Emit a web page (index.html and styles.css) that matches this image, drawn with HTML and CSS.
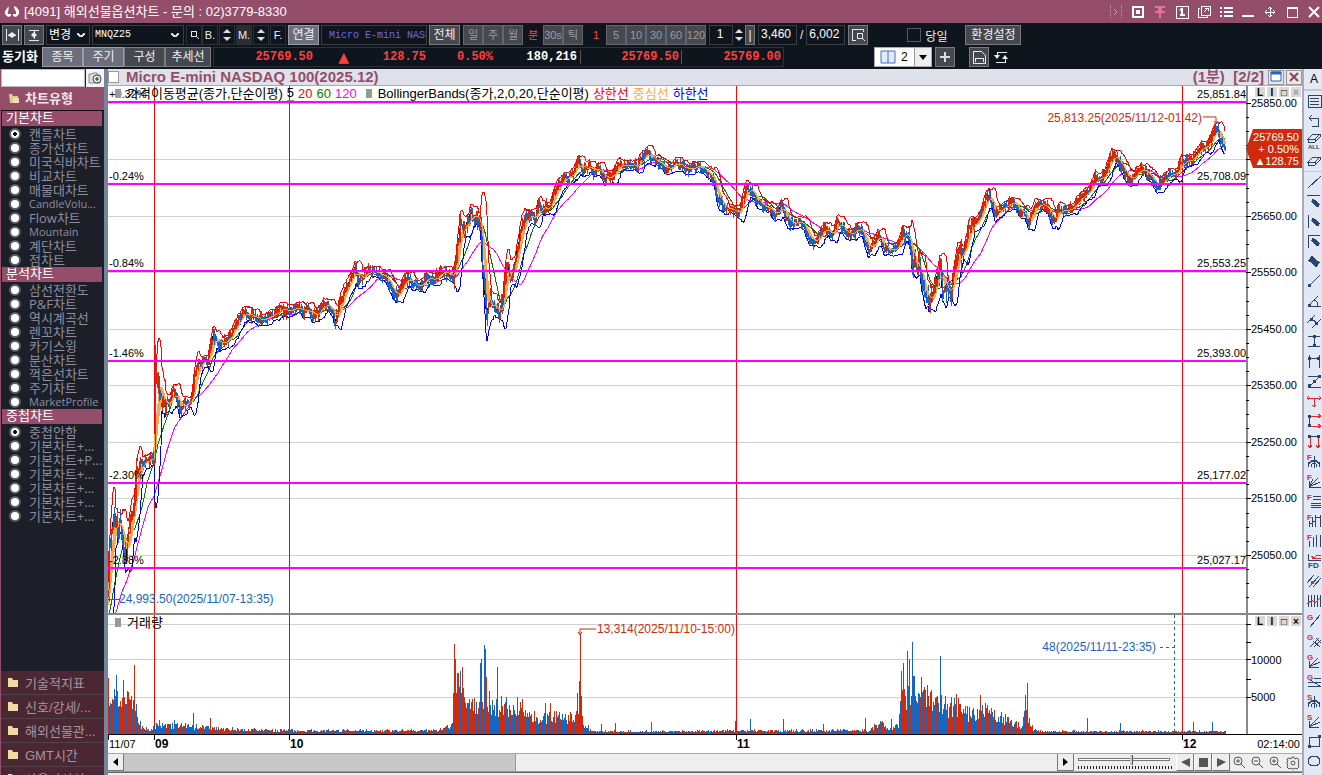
FILE: index.html
```html
<!DOCTYPE html>
<html lang="ko">
<head>
    <meta charset="UTF-8">
    <meta name="viewport" content="width=device-width, initial-scale=1.0">
    <title>해외선물옵션차트</title>
    <link rel="stylesheet" href="styles.css">
</head>
<body>
    <!-- 제목줄 -->
    <header class="titlebar">
        <svg class="logo" width="16" height="12" viewBox="0 0 16 12"><path d="M4 0C4 3 0 4 1 8l3 3 3-1V8L4 8C3 6 6 3 4 0z M10 0c3 1 6 4 5 8l-3 3-3-1V8l3 0c1-3-2-4-2-8z" fill="#fff"/></svg>
        <h1>[4091] 해외선물옵션차트 - 문의 : 02)3779-8330</h1>
        <div class="win">
            <svg width="14" height="16" viewBox="0 0 14 16"><path d="M1.500 1v14M12.500 1v14" stroke="#c49aaa" stroke-dasharray="1 1"/><path d="M5 5l3 3-3 3" stroke="#c49aaa" fill="none"/></svg>
            <button aria-label="캡처"><svg width="12" height="12" viewBox="0 0 12 12"><path d="M1 1h10v10H1z" class="wl"/><path d="M4 4h4v4H4z" fill="#fff"/></svg></button>
            <button aria-label="고정"><svg width="12" height="12" viewBox="0 0 12 12"><path d="M1 0h10v2H8v3h3v2H7v5H5V7H1V5h3V2H1z" fill="#e8729c"/></svg></button>
            <button aria-label="화면 1"><svg width="14" height="14" viewBox="0 0 14 14"><path d="M1 1h12v12H1z" class="thin"/><path d="M5 5l2-1v6M5 10h5" class="wl"/></svg></button>
            <button aria-label="새 창"><svg width="14" height="14" viewBox="0 0 14 14"><path d="M4 1h9v9H4zM3 3H1v9h9v-1M7 7l4-4M8 3h3v3" class="thin"/></svg></button>
            <button aria-label="목록"><svg width="13" height="12" viewBox="0 0 13 12"><path d="M0 2h2M0 6h2M0 10h2M4 2h9M4 6h9M4 10h9" class="wl"/></svg></button>
            <button aria-label="최소화"><svg width="12" height="12" viewBox="0 0 12 12"><path d="M0 10h12" class="wl"/></svg></button>
            <button aria-label="이동"><svg width="12" height="12" viewBox="0 0 12 12"><path d="M6 1v10M1 6h10M4 3l2-2 2 2M4 9l2 2 2-2M3 4L1 6l2 2M9 4l2 2-2 2" class="thin"/></svg></button>
            <button aria-label="최대화"><svg width="12" height="12" viewBox="0 0 12 12"><path d="M1 1h10v10H1zM1 2h10" class="thin"/></svg></button>
            <button aria-label="닫기"><svg width="12" height="12" viewBox="0 0 12 12"><path d="M1 1l10 10M11 1L1 11" class="wl"/></svg></button>
        </div>
    </header>

    <!-- 도구 모음 -->
    <div class="toolbar">
        <div class="row">
            <button class="btn w20" aria-label="좌우 맞춤"><svg width="14" height="12" viewBox="0 0 14 12"><path d="M1 0v12M13 0v12M3 6h8" class="ic"/><path d="M7 3v6L3 6zM7 3v6l4-3z" fill="#eee"/></svg></button>
            <button class="btn w20" aria-label="상하 맞춤"><svg width="12" height="12" viewBox="0 0 12 12"><path d="M1 1h10M1 11h10M6 2v8" class="ic"/><path d="M3 6l3-3 3 3-3 3z" fill="#eee"/></svg></button>
            <select class="sel w44" aria-label="변경"><option>변경</option></select>
            <select class="sel code" aria-label="종목코드"><option>MNQZ25</option></select>
            <div class="mini">
                <button aria-label="검색"><svg width="10" height="10" viewBox="0 0 10 10"><circle cx="5" cy="4" r="3" class="ic"/><path d="M7 6l3 3" class="ic"/></svg></button>
                <button>B.</button>
                <button class="spin" aria-label="B 조절"><svg width="8" height="14" viewBox="0 0 8 14"><path d="M0 5l4-4 4 4zM0 9l4 4 4-4z" fill="#ddd"/></svg></button>
                <button class="m">M.</button>
                <button class="spin" aria-label="M 조절"><svg width="8" height="14" viewBox="0 0 8 14"><path d="M0 5l4-4 4 4zM0 9l4 4 4-4z" fill="#ddd"/></svg></button>
                <button>F.</button>
            </div>
            <button class="btn on w31">연결</button>
            <input class="name" aria-label="종목명" value="Micro E-mini NASDAQ">
            <button class="btn w31">전체</button>
            <div class="group">
                <button>일</button><button>주</button><button>월</button><button class="cur">분</button><button>30s</button><button>틱</button>
            </div>
            <div class="group">
                <button class="cur">1</button><button>5</button><button>10</button><button>30</button><button>60</button><button>120</button>
            </div>
            <div class="counts">
                <input class="num w24" aria-label="주기" value="1">
                <button class="spin" aria-label="주기 조절"><svg width="8" height="14" viewBox="0 0 8 14"><path d="M0 5l4-4 4 4zM0 9l4 4 4-4z" fill="#ddd"/></svg></button>
                <button class="btn bar">|</button>
                <input class="num w40" aria-label="표시 개수" value="3,460">
                <span>/</span>
                <input class="num w40" aria-label="전체 개수" value="6,002">
                <button class="btn w20" aria-label="찾기"><svg width="14" height="14" viewBox="0 0 14 14"><path d="M5 12H1V1h11v3M12 11l2 2" class="ic"/><circle cx="9" cy="8" r="3" class="ic"/></svg></button>
            </div>
            <label class="today"><input type="checkbox">당일</label>
            <button class="btn w56">환경설정</button>
        </div>
        <div class="row">
            <b class="sync">동기화</b>
            <div class="tabs">
                <button class="btn on">종목</button><button class="btn on">주기</button><button class="btn">구성</button><button class="btn">추세선</button>
            </div>
            <div class="quote">
                <span class="q1">25769.50</span><span class="q2">▲</span><span class="q3">128.75</span><span class="q4">0.50%</span><span class="q5">180,216</span><span class="q6">25769.50</span><span class="q6">25769.00</span>
            </div>
            <div class="layout">
                <svg width="16" height="14" viewBox="0 0 16 14"><path d="M1 1h14v12H1zM8 1v12" fill="#e4ebf5" stroke="#3f6fd0"/></svg>
                <span>2</span>
                <button aria-label="화면 분할"><svg width="8" height="5" viewBox="0 0 8 5"><path d="M0 0h8L4 5z"/></svg></button>
            </div>
            <button class="btn w20" aria-label="추가"><svg width="12" height="12" viewBox="0 0 12 12"><path d="M6 1v10M1 6h10" stroke="#ddd" stroke-width="2"/></svg></button>
            <button class="btn w20 save" aria-label="저장"><svg width="14" height="14" viewBox="0 0 14 14"><path d="M1 1h8l4 4v8H1zM3 12V8h8v4" class="ic"/></svg></button>
            <button class="plain" aria-label="새로고침"><svg width="16" height="14" viewBox="0 0 16 14"><path d="M14 2H4v5M3 12h9V7" class="ic"/><path d="M1 5h6L4 9zM9 9h6l-3-4z" fill="#eee"/></svg></button>
        </div>
    </div>

    <div class="main">
        <!-- 왼쪽 차트 유형 -->
        <aside class="side">
            <div class="find">
                <input aria-label="차트 검색">
                <button aria-label="찾기"><svg width="14" height="13" viewBox="0 0 14 13"><path d="M1 2h3l1-1h4l1 2h2v8H1z" fill="#ddd" stroke="#888"/><circle cx="9" cy="7" r="4" fill="#eee" stroke="#444"/><path d="M7 7h4M9 5v4" stroke="#222"/></svg></button>
            </div>
            <h2><svg width="12" height="11" viewBox="0 0 12 11"><path d="M1 1h3l1 2h5v2H4l1 5H2z" fill="#e8c88a"/><path d="M4 5h7v5H5z" fill="#f3dfae"/></svg>차트유형</h2>
            <div class="list">
                <h3>기본차트</h3>
                <label><input type="radio" name="base" checked><span>캔들차트</span></label>
                <label><input type="radio" name="base"><span>종가선차트</span></label>
                <label><input type="radio" name="base"><span>미국식바차트</span></label>
                <label><input type="radio" name="base"><span>비교차트</span></label>
                <label><input type="radio" name="base"><span>매물대차트</span></label>
                <label class="en"><input type="radio" name="base"><span>CandleVolu...</span></label>
                <label><input type="radio" name="base"><span>Flow차트</span></label>
                <label class="en"><input type="radio" name="base"><span>Mountain</span></label>
                <label><input type="radio" name="base"><span>계단차트</span></label>
                <label><input type="radio" name="base"><span>점차트</span></label>
                <h3>분석차트</h3>
                <label><input type="radio" name="anal"><span>삼선전환도</span></label>
                <label><input type="radio" name="anal"><span>P&amp;F차트</span></label>
                <label><input type="radio" name="anal"><span>역시계곡선</span></label>
                <label><input type="radio" name="anal"><span>렌꼬차트</span></label>
                <label><input type="radio" name="anal"><span>카기스윙</span></label>
                <label><input type="radio" name="anal"><span>분산차트</span></label>
                <label><input type="radio" name="anal"><span>꺽은선차트</span></label>
                <label><input type="radio" name="anal"><span>주기차트</span></label>
                <label class="en"><input type="radio" name="anal"><span>MarketProfile</span></label>
                <h3>중첩차트</h3>
                <label><input type="radio" name="over" checked><span>중첩안함</span></label>
                <label><input type="radio" name="over"><span>기본차트+...</span></label>
                <label><input type="radio" name="over"><span>기본차트+P...</span></label>
                <label><input type="radio" name="over"><span>기본차트+...</span></label>
                <label><input type="radio" name="over"><span>기본차트+...</span></label>
                <label><input type="radio" name="over"><span>기본차트+...</span></label>
                <label><input type="radio" name="over"><span>기본차트+...</span></label>
            </div>
            <nav class="folders">
                <button><svg width="11" height="9" viewBox="0 0 11 9"><path d="M0 0h4l1 2h5v7H0z" fill="#f3d9a4"/></svg>기술적지표</button>
                <button><svg width="11" height="9" viewBox="0 0 11 9"><path d="M0 0h4l1 2h5v7H0z" fill="#f3d9a4"/></svg>신호/강세/...</button>
                <button><svg width="11" height="9" viewBox="0 0 11 9"><path d="M0 0h4l1 2h5v7H0z" fill="#f3d9a4"/></svg>해외선물관...</button>
                <button><svg width="11" height="9" viewBox="0 0 11 9"><path d="M0 0h4l1 2h5v7H0z" fill="#f3d9a4"/></svg>GMT시간</button>
                <button><svg width="11" height="9" viewBox="0 0 11 9"><path d="M0 0h4l1 2h5v7H0z" fill="#f3d9a4"/></svg>사용자상식</button>
            </nav>
        </aside>

        <!-- 차트 -->
        <section class="chart">
            <div class="caption">
                <input type="checkbox" aria-label="차트 선택">
                <h2>Micro E-mini NASDAQ 100(2025.12)</h2>
                <b>(1분)&nbsp; [2/2]</b>
                <button aria-label="최대화"><svg width="12" height="12" viewBox="0 0 12 12"><path d="M1 1h10v9H1z" fill="#fff" stroke="#2a5fc0"/><path d="M1 2h10" stroke="#2a5fc0" stroke-width="3"/></svg></button>
                <button aria-label="닫기"><svg width="10" height="10" viewBox="0 0 10 10"><path d="M1 1l8 8M9 1L1 9" stroke="#8d4058" stroke-width="2"/></svg></button>
            </div>
            <div class="pane price">
                <svg id="price"></svg>
                <div class="legend">
                    <i></i><span>가격이동평균(종가,단순이평)</span><span class="u">5</span><span class="red">20</span><span class="green">60</span><span class="pink">120</span>
                    <i></i><span>BollingerBands(종가,2,0,20,단순이평)</span><span class="red">상한선</span><span class="orange">중심선</span><span class="blue">하한선</span>
                </div>
                <div class="ctl"><button>L</button><button>I</button><button>□</button><button class="off">×</button></div>
            </div>
            <div class="pane volume">
                <svg id="volume"></svg>
                <div class="legend"><i></i><span>거래량</span></div>
                <div class="ctl"><button>L</button><button>I</button><button>□</button><button>×</button></div>
            </div>
            <div class="dates"><svg id="dates"></svg><span>02:14:00</span></div>
            <div class="scroll">
                <button aria-label="왼쪽"><svg width="5" height="8" viewBox="0 0 5 8"><path d="M5 0v8L0 4z"/></svg></button>
                <div class="track"><div class="thumb"></div></div>
                <button aria-label="오른쪽"><svg width="5" height="8" viewBox="0 0 5 8"><path d="M0 0v8l5-4z"/></svg></button>
                <div class="zoom"><input type="range" min="0" max="100" value="59" aria-label="확대"><div class="ticks"></div></div>
                <button class="pl" aria-label="이전"><svg width="9" height="9" viewBox="0 0 9 9"><path d="M9 0v9L0 4z" fill="#555"/></svg></button>
                <button class="pl" aria-label="정지"><svg width="9" height="9" viewBox="0 0 9 9"><path d="M0 0h9v9H0z" fill="#555"/></svg></button>
                <button class="pl" aria-label="재생"><svg width="9" height="9" viewBox="0 0 9 9"><path d="M0 0v9l9-5z" fill="#555"/></svg></button>
                <button class="zm" aria-label="확대"><svg width="13" height="13" viewBox="0 0 13 13"><circle cx="5" cy="5" r="4"/><path d="M8 8l4 4M3 5h4M5 3v4"/></svg></button>
                <button class="zm" aria-label="축소"><svg width="13" height="13" viewBox="0 0 13 13"><circle cx="5" cy="5" r="4"/><path d="M8 8l4 4M3 5h4"/></svg></button>
                <button class="zm" aria-label="영역 확대"><svg width="13" height="13" viewBox="0 0 13 13"><circle cx="5" cy="5" r="4"/><path d="M8 8l4 4M4 4h2v2H4z"/></svg></button>
                <button class="zm" aria-label="설정"><svg width="14" height="14" viewBox="0 0 14 14"><path d="M6 1h2l1 2 2-1 2 2-1 2 1 1v1l-1 1 1 2-2 2-2-1-1 1H6l-1-1-2 1-2-2 1-2-1-1V6l1-1-1-2 2-1 2 1z"/><circle cx="7" cy="7" r="2"/></svg></button>
            </div>
            <div class="foot"></div>
        </section>

        <!-- 오른쪽 그리기 도구 -->
        <nav class="draw">
            <button class="first">A</button>
            <button aria-label="목록"><svg viewBox="0 0 14 14"><path d="M1 1h13v12H1zM3 4h9M3 7h9M3 10h9"/></svg></button>
            <button aria-label="되돌리기"><svg viewBox="0 0 14 14"><path d="M5 1L2 4l3 3M2 4h9v8H5"/></svg></button>
            <button aria-label="전체 삭제"><svg viewBox="0 0 14 14"><path d="M1 5l5-5h7l-5 5zM1 5v3h7l5-5V0M8 5v3"/><text x="1" y="15">ALL</text></svg></button>
            <button aria-label="삭제"><svg viewBox="0 0 14 14"><path d="M1 8l5-5h7l-5 5zM1 8v3h7l5-5V3M8 8v3"/></svg></button>
            <button class="sep" aria-label="추세선"><svg viewBox="0 0 14 14"><path d="M1 13L14 1"/></svg></button>
            <button aria-label="수평선"><svg viewBox="0 0 14 14"><path d="M0 1h13"/><path class="pen" d="M5 6l7 6"/></svg></button>
            <button aria-label="수직선"><svg viewBox="0 0 14 14"><path d="M1 1v13"/><path class="pen" d="M5 5l7 6"/></svg></button>
            <button aria-label="십자선"><svg viewBox="0 0 14 14"><path d="M1 14V1h12"/><path class="pen" d="M5 5l7 6"/></svg></button>
            <button aria-label="펜"><svg viewBox="0 0 14 14"><path class="pen big" d="M3 4l8 7"/></svg></button>
            <button aria-label="선분"><svg viewBox="0 0 14 14"><path d="M2 12L13 1"/><path class="sq" d="M1 10h3v3H1z"/></svg></button>
            <button aria-label="각도"><svg viewBox="0 0 14 14"><path d="M1 12L11 2M1 12h13M7 6c3 1 4 3 4 6"/><path class="sq" d="M1 10h3v3H1z"/></svg></button>
            <button aria-label="평행선"><svg viewBox="0 0 14 14"><path d="M0 9L8 1M5 14l9-9M5 5l5 4"/><path class="sq" d="M3 4h3v3H3zM8 8h3v3H8z"/></svg></button>
            <button aria-label="세로 간격"><svg viewBox="0 0 14 14"><path d="M1 2h12M1 12h12M7 2v10"/><path class="sq" d="M6 1h3v3H6zM6 10h3v3H6z"/></svg></button>
            <button aria-label="가로 간격"><svg viewBox="0 0 14 14"><path d="M2 1v13M12 1v13M2 4h10"/><path class="sq" d="M1 3h3v3H1zM10 3h3v3h-3z"/></svg></button>
            <button aria-label="지그재그"><svg viewBox="0 0 14 14"><path d="M1 2h12L2 13h12"/><path class="sq" d="M11 1h3v3h-3zM6 6h3v3H6zM1 10h3v3H1z"/></svg></button>
            <button class="r" aria-label="가격 표시"><svg viewBox="0 0 14 14"><path d="M0 4h14M7 4v9M2 2L0 4l2 2M12 2l2 2-2 2M5 11l2 2 2-2"/></svg></button>
            <button class="r" aria-label="가로 확장"><svg viewBox="0 0 14 14"><path d="M2 2h12M2 12h12M11 0l3 2-3 2M11 10l3 2-3 2"/><path class="n" d="M2 2v10"/><path class="sq" d="M1 1h3v3H1zM1 10h3v3H1z"/></svg></button>
            <button class="r" aria-label="세로 확장"><svg viewBox="0 0 14 14"><path d="M3 2v11M11 2v11M1 11l2 3 2-3M9 11l2 3 2-3"/><path class="n" d="M3 2h8"/><path class="sq" d="M1 1h3v3H1zM10 1h3v3h-3z"/></svg></button>
            <button aria-label="피보나치 원"><svg viewBox="0 0 14 14"><text class="t" x="0" y="6">F</text><path d="M7 2v12M1 13c1-9 11-9 12 0M4 13c0-5 6-5 6 0M1 9l6-2 6 2"/></svg></button>
            <button aria-label="피보나치 팬"><svg viewBox="0 0 14 14"><text class="t" x="0" y="6">F</text><path d="M2 7v6h12M2 13l9-9M2 13l11-5M2 13L6 5"/></svg></button>
            <button aria-label="피보나치 조정"><svg viewBox="0 0 14 14"><text class="t" x="0" y="6">F</text><path d="M6 2h8M6 5h8M4 9h10M4 11h10M4 13h10"/></svg></button>
            <button aria-label="피보나치 목표"><svg viewBox="0 0 14 14"><text class="t" x="0" y="6">F</text><path d="M2 7v6M5 3v10M8 1v12M13 1v12M2 9h3M5 7h3M8 3h5"/></svg></button>
            <button aria-label="피보나치 시간"><svg viewBox="0 0 14 14"><text class="t" x="0" y="6">F</text><path d="M2 7v6M6 3v10M9 1v12M13 1v12"/></svg></button>
            <button class="r" aria-label="FD"><svg viewBox="0 0 14 14"><path d="M4 2l3 2 3-3h4M5 4h9"/><path class="n" d="M1 0v6h13"/><text x="1" y="14" class="fd">FD</text></svg></button>
            <button aria-label="채널"><svg viewBox="0 0 14 14"><path d="M0 9l7-8M2 13L12 2M6 13l8-9"/><path class="dot" d="M4 7h3v3H4z"/></svg></button>
            <button class="r" aria-label="주기선"><svg viewBox="0 0 14 14"><path class="n" d="M1 1v12M4 1v12M7 1v12M10 1v12M13 1v12"/><path d="M0 10l5-4 3 3 5-5"/></svg></button>
            <button aria-label="갠 라인"><svg viewBox="0 0 14 14"><text class="t" x="0" y="6">G</text><path d="M3 13L13 1"/></svg></button>
            <button aria-label="갠 그리드"><svg viewBox="0 0 14 14"><text class="t" x="0" y="6">G</text><path d="M3 13l9-9M7 13l7-7M6 7l7 6M9 4l5 5"/></svg></button>
            <button aria-label="갠 팬"><svg viewBox="0 0 14 14"><text class="t" x="0" y="6">G</text><path d="M2 7v6h10M2 13L11 4M2 13l11-5"/></svg></button>
            <button aria-label="갠 조정"><svg viewBox="0 0 14 14"><text class="t" x="0" y="6">G</text><path d="M7 4h7M1 8h13M1 12h13M3 6l10 6"/></svg></button>
            <button aria-label="스피드 아크"><svg viewBox="0 0 14 14"><text class="t" x="0" y="6">S</text><path d="M7 2v12M1 13c1-9 11-9 12 0M4 13c0-5 6-5 6 0M1 9l6-2 6 2"/></svg></button>
            <button aria-label="스피드 라인"><svg viewBox="0 0 14 14"><text class="t" x="0" y="6">S</text><path d="M2 7v6h10M2 13L12 3M2 13l11-5"/></svg></button>
            <button aria-label="사각형"><svg viewBox="0 0 14 14"><path d="M2 3h10v9H2z"/><path class="sq" d="M11 1h3v3h-3zM1 11h3v3H1z"/></svg></button>
            <button aria-label="원"><svg viewBox="0 0 14 14"><ellipse cx="7" cy="7" rx="6" ry="5"/></svg></button>
        </nav>
    </div>
    <script src="chart.js"></script>
</body>
</html>
```

FILE: styles.css
```css
*{
    margin: 0;
    padding: 0;
    box-sizing: border-box;
}
body{
    display: flex;
    flex-direction: column;
    height: 100vh;
    overflow: hidden;
    background-color: #0f151c;
    font: 12px "Liberation Sans", "Noto Sans CJK KR", sans-serif;
}
button, input, select{
    font: inherit;
    border: 0;
    border-radius: 0;
}
button{
    display: flex;
    align-items: center;
    justify-content: center;
    white-space: nowrap;
    background: none;
}
svg{
    display: block;
    flex: none;
}

/* 제목줄 */
.titlebar{
    display: flex;
    align-items: center;
    flex: none;
    height: 23px;
    padding: 0 1px 0 4px;
    background-color: #944e69;
    color: #fff;
}
.titlebar h1{
    flex: 1;
    margin-left: 4px;
    font-size: 13px;
    line-height: 16px;
    font-weight: normal;
}
.win{
    display: flex;
    align-items: center;
    gap: 8px;
}
.win button{
    width: 14px;
    height: 16px;
}
.wl, .thin, .ic{
    fill: none;
    stroke: #fff;
    stroke-width: 2;
}
.thin{
    stroke-width: 1;
    shape-rendering: crispEdges;
}
.ic{
    stroke: #e8e8e8;
    stroke-width: 1;
    shape-rendering: crispEdges;
}

/* 도구 모음 */
.toolbar{
    flex: none;
    height: 46px;
    padding: 1px 2px;
    color: #eee;
}
.row{
    display: flex;
    align-items: center;
    height: 22px;
    gap: 2px;
}
.btn{
    height: 20px;
    flex: none;
    background-color: #45494f;
    border: 1px solid #777b80;
    color: #f0f0f0;
    line-height: 16px;
}
.btn.on{
    background-color: #6c6f7b;
    border-color: #9a9da8;
}
.w20{ width: 20px; }
.w24{ width: 24px; }
.w31{ width: 31px; }
.w40{ width: 39px; }
.w44{ width: 44px; }
.w56{ width: 56px; }
.sel, .name, .num{
    height: 20px;
    background-color: #0f151c;
    border: 1px solid #3a3d44;
    color: #fff;
}
.sel{
    appearance: none;
    padding-left: 2px;
    line-height: 18px;
    background-image: linear-gradient(45deg, transparent 35%, #ddd 35%, #ddd 65%, transparent 65%), linear-gradient(-45deg, transparent 35%, #ddd 35%, #ddd 65%, transparent 65%);
    background-size: 4px 4px;
    background-position: right 8px center, right 4px center;
    background-repeat: no-repeat;
}
.code{
    width: 92px;
    font: 10px/18px "Liberation Mono", monospace;
}
.mini, .group, .tabs, .counts{
    display: flex;
    align-items: center;
    flex: none;
}
.mini button{
    width: 16px;
    height: 20px;
    border: 1px solid #2b2f36;
    color: #eee;
    font-size: 11px;
}
.mini .m{
    background-color: #2b2d31;
}
.mini .spin{
    margin: 0 1px;
}
.name{
    width: 106px;
    padding-left: 7px;
    color: #6f67e8;
    font: 10px "Liberation Mono", "Noto Sans CJK KR", monospace;
}
.group{
    margin-left: 1px;
}
.group button{
    width: 20px;
    height: 20px;
    background-color: #45494f;
    border: 1px solid #63666b;
    color: #9a9da1;
    font-size: 11px;
    line-height: 16px;
}
.group .cur{
    background-color: #0f151c;
    border-color: #0f151c;
    color: #ff4a40;
}
.counts{
    margin-left: 1px;
}
.spin{
    width: 12px;
    height: 18px;
}
.bar{
    width: 10px;
    margin-right: 3px;
}
.num{
    padding: 0 4px 2px 2px;
    font-size: 12px;
}
.num.w24{
    text-align: center;
}
.counts span{
    padding: 0 3px;
}
.counts .w20{
    margin-left: 3px;
}
.today{
    display: flex;
    align-items: center;
    gap: 4px;
    margin: 0 16px 0 26px;
}
.today input{
    appearance: none;
    width: 14px;
    height: 14px;
    border: 1px solid #55585e;
}
.counts + .today{
    margin-left: 37px;
}
.sync{
    width: 38px;
    font-size: 13px;
    line-height: 16px;
    color: #fff;
    white-space: nowrap;
}
.tabs .btn{
    width: 41px;
}
.tabs .btn:last-child{
    width: 46px;
}
.quote{
    display: flex;
    align-items: center;
    height: 20px;
    border: 1px solid #2b2f3a;
    color: #ff4040;
    text-align: right;
    font: bold 12px "Liberation Mono", monospace;
}
.q1{ width: 99px; }
.q2{
    width: 36px;
    font: 14px "DejaVu Sans", sans-serif;
}
.q3{ width: 77px; }
.q4{ width: 67px; }
.q5{
    width: 88px;
    padding-right: 3px;
    border-right: 1px solid #555;
    color: #fff;
}
.q6{
    width: 101px;
    padding-right: 2px;
}
.q5 + .q6{
    border-right: 1px solid #555;
}
.layout{
    display: flex;
    align-items: center;
    height: 20px;
    margin: 0 1px 0 88px;
    padding-left: 5px;
    gap: 5px;
    background-color: #fff;
    border: 1px solid #aaa;
    color: #000;
}
.layout button{
    width: 17px;
    height: 18px;
    margin-left: 1px;
    background-color: #eee;
    border-left: 1px solid #999;
}
.save{
    margin-left: 12px;
}
.plain{
    width: 20px;
    height: 20px;
}

/* 왼쪽 */
.main{
    display: flex;
    flex: 1;
    min-height: 0;
}
.side{
    display: flex;
    flex-direction: column;
    flex: none;
    width: 108px;
    border-left: 1px solid #944e69;
    border-right: 4px solid #74869a;
    background-color: #1c1e28;
}
.find{
    display: flex;
    flex: none;
    height: 18px;
    background-color: #fff;
}
.find input{
    flex: 1;
    min-width: 0;
    border: 1px solid #bbb;
}
.find button{
    width: 19px;
    border-left: 1px solid #222;
    background-color: #f4f4f4;
}
.side h2{
    display: flex;
    align-items: center;
    flex: none;
    height: 23px;
    padding-left: 7px;
    gap: 5px;
    background-color: #944e69;
    color: #f3e6ea;
    font-size: 13px;
    line-height: 16px;
}
.list{
    flex: 1;
    overflow: hidden;
    border-top: 1px solid #111;
}
.list h3{
    height: 15px;
    margin: 0 2px 0 1px;
    padding-left: 4px;
    background-color: #944e69;
    color: #fff;
    font-size: 13px;
    line-height: 14px;
    font-weight: normal;
}
.list label{
    display: flex;
    align-items: center;
    height: 14px;
    padding-left: 8px;
    color: #8c8fa0;
    white-space: nowrap;
    font: 13px/14px "Open Sans", "Noto Sans CJK KR", sans-serif;
}
.list .en{
    font-size: 11px;
}
.list h3 + label{
    margin-top: 1px;
}
.list input{
    appearance: none;
    flex: none;
    width: 12px;
    height: 12px;
    margin-right: 8px;
    border: 2px solid #5a5c60;
    border-radius: 50%;
    background-color: #fff;
}
.list input:checked{
    background-image: radial-gradient(circle, #000 2px, transparent 2px);
}
.folders{
    flex: none;
    height: 104px;
    overflow: hidden;
}
.folders button{
    justify-content: flex-start;
    width: 100%;
    height: 24px;
    padding-left: 7px;
    gap: 6px;
    background-color: #4a2733;
    border-bottom: 1px solid #4b4448;
    color: #a596a0;
    font-size: 13px;
}

/* 차트 */
.chart{
    display: flex;
    flex-direction: column;
    flex: 1;
    min-width: 0;
    background-color: #fff;
}
.caption{
    display: flex;
    align-items: center;
    flex: none;
    height: 17px;
    gap: 2px;
    background-color: #dfe2ea;
    border-bottom: 1px solid #aaa;
    color: #944e69;
}
.caption input{
    appearance: none;
    width: 11px;
    height: 12px;
    background-color: #fff;
    border: 1px solid #999;
}
.caption h2, .caption b{
    font-size: 15px;
    line-height: 16px;
    white-space: nowrap;
}
.caption h2{
    flex: 1;
    padding-left: 5px;
}
.caption b{
    padding-right: 2px;
}
.caption button{
    width: 16px;
    height: 15px;
    background-color: #e8e8e8;
    border: 1px solid #999;
}
.pane{
    position: relative;
    min-height: 0;
    overflow: hidden;
}
.price{
    flex: 529;
}
.volume{
    flex: 120;
    border-top: 2px solid #888;
}
.pane > svg, .dates svg{
    width: 100%;
    height: 100%;
}
.pane > svg text, .dates text{
    font-size: 11px;
}
.pane > svg .note, .dates .day{
    font-size: 12px;
}
.legend{
    position: absolute;
    left: 7px;
    top: 0;
    display: flex;
    align-items: center;
    height: 15px;
    gap: 4px;
    font-size: 13px;
    line-height: 14px;
    white-space: nowrap;
}
.legend i{
    width: 6px;
    height: 9px;
    margin-right: 2px;
    background-color: #999;
}
.legend span + i{
    margin-left: 5px;
}
.u{ border-bottom: 1px solid #888; }
.red{ color: #f00; }
.green{ color: #008000; }
.pink{ color: #f0f; }
.orange{ color: #ffa64d; }
.blue{ color: #00f; }
.ctl{
    position: absolute;
    right: 1px;
    top: 1px;
    display: flex;
    gap: 2px;
}
.ctl button{
    width: 10px;
    height: 10px;
    background-color: #d8d8d8;
    font-size: 10px;
    font-weight: bold;
}
.ctl .off{
    color: #999;
}
.dates{
    position: relative;
    flex: none;
    height: 18px;
}
.dates span{
    position: absolute;
    right: 2px;
    top: 3px;
    font-size: 11px;
}
.scroll{
    display: flex;
    flex: none;
    height: 19px;
    background-color: #eee;
    border-top: 1px solid #aaa;
    border-bottom: 1px solid #999;
}
.scroll button{
    width: 16px;
    flex: none;
    background-color: #eee;
    border-right: 1px solid #777;
    border-bottom: 1px solid #777;
}
.track{
    flex: 1;
    border-right: 1px solid #777;
}
.thumb{
    width: 42%;
    height: 100%;
    background-color: #c8c8c8;
    border-right: 1px solid #999;
}
.zoom{
    width: 94px;
    margin: 0 4px;
}
.zoom input{
    display: block;
    appearance: none;
    width: 92px;
    height: 3px;
    margin: 4px 0 5px;
    border: 1px solid #777;
    background-color: #fff;
}
.zoom input::-webkit-slider-thumb{
    appearance: none;
    width: 3px;
    height: 10px;
    background-color: #ccc;
    border-right: 1px solid #555;
}
.ticks{
    height: 3px;
    background-image: repeating-linear-gradient(90deg, #222 0 1px, transparent 1px 3px);
}
.scroll .pl{
    width: 18px;
    border-left: 1px solid #fff;
}
.scroll .zm{
    width: 18px;
    border: 0;
}
.zm svg{
    fill: none;
    stroke: #555;
}
.foot{
    flex: none;
    height: 3px;
    border-top: 1px solid #666;
    background-color: #eee;
}

/* 오른쪽 */
.draw{
    flex: none;
    width: 20px;
    overflow: hidden;
    background-color: #e2e8f4;
    border-left: 2px solid #aab;
}
.draw button{
    width: 18px;
    height: 20px;
    padding-left: 2px;
}
.draw .first{
    height: 22px;
    border-bottom: 2px solid #c4c8d4;
}
.draw .sep{
    border-top: 1px solid #c4c8d4;
}
.draw svg{
    width: 14px;
    height: 14px;
    fill: none;
    stroke: #29456f;
    overflow: visible;
    shape-rendering: crispEdges;
}
.draw .r svg{
    stroke: #e8262a;
}
.draw .n{
    stroke: #29456f;
}
.draw .pen{
    stroke-width: 4;
}
.draw .big{
    stroke-width: 6;
}
.draw .sq{
    fill: #29456f;
    stroke: none;
}
.draw .dot{
    fill: #e8262a;
    stroke: none;
}
.draw text{
    fill: #29456f;
    stroke: none;
    font: bold 6px "Liberation Sans", sans-serif;
}
.draw .t{
    fill: #e8262a;
    font-size: 8px;
}
.draw .fd{
    font-size: 8px;
}
```

FILE: chart.js
```js
// 기준 크기 (가격창 1138 x 528, 거래량창 118), 창 크기에 맞춰 비율로 그린다
var BASE_W = 1138, BASE_H = 528, BASE_V = 118, AXIS = 56, BARS = 1118
var UP = "#cf2a0c", DOWN = "#1566c0"

// 종가 흐름 [x, y]
var path = [[-45,600],[-20,560],[0,514],[1,460],[3,450],[6,430],[9,440],[12,434],[14,450],[17,480],[20,440],[23,430],[26,420],[28,384],[32,378],[38,376],[45,374],[46,370],[47,290],[50,300],[53,318],[58,322],[62,314],[65,302],[69,318],[72,324],[76,315],[80,320],[84,306],[86,288],[90,279],[95,276],[99,276],[102,258],[105,251],[110,260],[114,258],[120,252],[125,244],[130,234],[135,225],[140,231],[145,229],[149,234],[157,233],[163,230],[170,223],[176,226],[182,226],[189,222],[195,227],[199,220],[203,231],[210,225],[217,219],[222,222],[227,236],[232,214],[237,204],[242,195],[247,180],[250,195],[254,190],[258,186],[267,186],[276,190],[282,204],[288,211],[294,199],[300,190],[304,200],[312,201],[319,190],[325,197],[330,187],[337,186],[342,190],[345,194],[348,170],[352,139],[355,150],[360,130],[367,127],[372,140],[375,194],[378,226],[382,212],[386,220],[390,226],[394,219],[397,190],[399,174],[402,196],[407,176],[412,144],[417,130],[424,130],[427,134],[430,117],[435,124],[442,119],[449,101],[454,94],[459,92],[465,89],[470,74],[474,86],[479,79],[484,84],[489,84],[496,92],[504,90],[511,76],[516,80],[522,79],[529,80],[538,66],[544,74],[552,79],[559,84],[566,77],[574,82],[582,84],[590,80],[598,86],[605,94],[610,114],[616,123],[625,124],[630,127],[634,114],[639,101],[645,109],[652,119],[660,124],[667,129],[673,117],[677,134],[684,136],[692,136],[698,146],[704,157],[710,152],[716,142],[724,149],[729,136],[735,144],[742,149],[748,142],[754,146],[759,164],[765,159],[770,150],[775,162],[782,164],[789,159],[794,146],[800,149],[804,179],[810,179],[815,204],[821,219],[825,204],[830,189],[832,170],[834,212],[839,199],[843,204],[849,169],[855,174],[860,144],[865,139],[870,134],[877,114],[881,109],[886,129],[892,122],[900,119],[905,117],[912,127],[917,130],[920,139],[926,119],[935,119],[940,124],[945,139],[950,122],[957,126],[964,122],[970,114],[976,109],[981,104],[985,94],[992,94],[998,84],[1004,68],[1010,76],[1016,89],[1022,94],[1028,87],[1034,84],[1040,89],[1048,101],[1055,94],[1060,86],[1066,92],[1071,77],[1078,76],[1085,74],[1092,62],[1099,59],[1105,50],[1108,42],[1112,54],[1117,62]]

// 거래량 흐름 [x, 높이]
var vol = [[0,48],[8,42],[12,36],[20,38],[26,34],[28,18],[34,8],[42,4],[50,12],[65,9],[80,9],[110,7],[130,5],[200,4],[330,4],[344,10],[346,70],[352,48],[362,34],[370,30],[378,40],[384,34],[400,30],[410,32],[420,22],[432,18],[445,20],[460,16],[468,26],[472,30],[476,8],[484,3],[560,3],[625,4],[700,4],[760,4],[772,12],[782,6],[790,10],[794,45],[806,50],[820,38],[834,32],[850,30],[862,22],[875,26],[890,20],[905,12],[914,9],[917,32],[921,14],[926,5],[935,3],[1000,3],[1117,3]]
var spikes = {8:58,15:53,26:68,28:30,66:14,85:21,102:16,346:89,347:74,349:60,352:62,354:66,372:70,373:74,376:88,377:84,378:56,389:66,414:34,437:31,442:31,469:40,471:52,472:98,473:37,480:9,493:10,507:11,543:12,627:13,642:15,675:15,715:10,757:16,783:15,793:62,795:70,799:82,801:74,804:91,805:57,813:56,819:48,832:77,848:39,872:38,917:38,919:50,979:16,1012:11,1085:12,1104:12}

var levels = [["+0.32%","25,851.84",16],["-0.24%","25,708.09",98],["-0.84%","25,553.25",185],["-1.46%","25,393.00",276],["-2.30%","25,177.02",398],["-2.88%","25,027.17",483]]
var days = [["11/07",0],["09",46],["10",181],["11",628],["12",1074]]

var seed = 7
function rnd() {
    seed = (seed * 16807) % 2147483647
    return seed / 2147483647
}
function at(list, x) {
    for (var i = 1; i < list.length; i++) {
        if (x <= list[i][0]) {
            var a = list[i - 1], b = list[i]
            return a[1] + (b[1] - a[1]) * (x - a[0]) / (b[0] - a[0])
        }
    }
    return list[list.length - 1][1]
}

// 봉 데이터 생성
var OFF = 45, close = [], bars = [], vols = []
for (var i = -OFF; i < BARS; i++) {
    var wild = (i < 30 || (i > 46 && i < 60) || (i > 345 && i < 400) || (i > 795 && i < 860)) ? 13 : 7
    close.push(at(path, i) + (rnd() - 0.5) * wild)
    bars.push([rnd() * rnd() * wild + 1, rnd() * rnd() * wild + 1])
}
var up = true
for (i = 0; i < BARS; i++) {
    if (rnd() < 0.4) up = !up
    vols.push([spikes[i] || Math.max(2, at(vol, i) * (0.5 + rnd() * 0.7)), up])
}
;[26, 346, 347, 349, 472, 804, 919].forEach(function (k) { vols[k][1] = true })
;[8, 372, 373, 376, 377, 389, 471, 473, 795, 799, 832, 917].forEach(function (k) { vols[k][1] = false })
vols[804][1] = false

function avg(i, n) {
    var s = 0, c = 0
    for (var k = Math.max(0, i - n + 1); k <= i; k++) { s += close[k]; c++ }
    return s / c
}
function dev(i, n) {
    var m = avg(i, n), s = 0, c = 0
    for (var k = Math.max(0, i - n + 1); k <= i; k++) { s += Math.pow(close[k] - m, 2); c++ }
    return Math.sqrt(s / c)
}
function line(x1, y1, x2, y2, color, w, more) {
    return '<line x1="' + x1 + '" y1="' + y1 + '" x2="' + x2 + '" y2="' + y2 + '" stroke="' + color + '" stroke-width="' + w + '" shape-rendering="crispEdges" ' + (more || "") + '/>'
}
function text(x, y, s, color, more) {
    return '<text x="' + x + '" y="' + y + '" fill="' + color + '" ' + (more || "") + '>' + s + '</text>'
}

function draw() {
    var price = document.getElementById("price"), volume = document.getElementById("volume"), dates = document.getElementById("dates")
    var W = price.clientWidth - AXIS, H = price.clientHeight, V = volume.clientHeight
    var sx = W / BASE_W, sy = H / BASE_H, sv = V / BASE_V
    var out = "", i, y

    // 가로 격자와 세로 날짜선
    for (i = 0; i < 9; i++) {
        y = Math.round((17 + i * 56.6) * sy)
        out += line(0, y, W, y, "#d0d0d0", 1)
    }
    days.slice(1).forEach(function (d) { out += line(d[1] * sx, 0, d[1] * sx, H, "#f00", 1) })

    function curve(fn, color, w) {
        var d = ""
        for (var i = 0; i < BARS; i++) d += (i ? "L" : "M") + (i * sx).toFixed(1) + " " + (fn(i + OFF) * sy).toFixed(1)
        return '<path d="' + d + '" fill="none" stroke="' + color + '" stroke-width="' + w + '" shape-rendering="crispEdges"/>'
    }
    out += curve(function (i) { return avg(i, 2) }, "#000", 1)
    out += curve(function (i) { return avg(i, 40) }, "#f0f", 1)
    out += curve(function (i) { return avg(i, 20) }, "#008000", 1)
    out += curve(function (i) { return avg(i, 8) - dev(i, 8) * 1.9 - 2 }, "#f00", 1)
    out += curve(function (i) { return avg(i, 8) + dev(i, 8) * 1.9 + 2 }, "#00f", 1)
    out += curve(function (i) { return avg(i, 7) }, "#ffa64d", 3)

    // 캔들
    var dn = "", ups = "", red = true
    for (i = 0; i < BARS; i++) {
        var c = close[i + OFF], o = close[i + OFF - 1], b = bars[i + OFF]
        // 방향이 작게 흔들릴 때는 앞 봉의 색을 유지
        if (Math.abs(c - o) > 2) red = c < o
        var s = "M" + (i * sx + 0.5).toFixed(1) + " " + ((Math.min(c, o) - b[0]) * sy).toFixed(1) + "V" + ((Math.max(c, o) + b[1]) * sy).toFixed(1)
        if (red) ups += s
        else dn += s
    }
    out += '<path d="' + ups + '" stroke="' + UP + '" shape-rendering="crispEdges"/><path d="' + dn + '" stroke="' + DOWN + '" shape-rendering="crispEdges"/>'
    out += curve(function (i) { return avg(i, 9) }, "#ffa64d", 1)
    out += line(47 * sx, 259 * sy, 47 * sx, 370 * sy, UP, 1)

    // 기준선
    levels.forEach(function (l) {
        var y = Math.round(l[2] * sy)
        out += line(0, y, W, y, "#f0f", 2) + text(1, y - 4, l[0], "#000") + text(W, y - 4, l[1], "#000", 'text-anchor="end"')
    })
    out += text(W - 44, 36 * sy, "25,813.25(2025/11/12-01:42)", UP, 'class="note" text-anchor="end"')
    out += '<path d="M' + (W - 43) + " " + 31 * sy + "H" + 1108 * sx + 'v6m-2 -2l2 3l2 -3" fill="none" stroke="' + UP + '"/>'
    out += line(0, 514 * sy, 11, 514 * sy, DOWN, 1) + text(11, 518 * sy, "24,993.50(2025/11/07-13:35)", DOWN, 'class="note"')

    // 가격축
    out += '<rect x="' + W + '" y="0" width="' + AXIS + '" height="' + H + '" fill="#fff"/>' + line(W + 1, 0, W + 1, H, "#888", 2)
    for (i = 0; i < 36; i++) {
        y = Math.round((17 + i * 14.15) * sy)
        out += line(W, y, W + (i % 4 ? 3 : 5), y, "#000", 1)
        if (i % 4 === 0 && i !== 4) out += text(W + 5, y + 4, (25850 - i * 25) + ".00", "#000")
    }
    y = 63 * sy
    out += '<path d="M' + W + " " + y + "l7 -20h49v39h-49z" + '" fill="' + UP + '"/>'
    out += text(W + 53, y - 8, "25769.50", "#fff", 'text-anchor="end"') + text(W + 53, y + 4, "+ 0.50%", "#fff", 'text-anchor="end"') + text(W + 53, y + 16, "▲128.75", "#fff", 'text-anchor="end"')
    price.innerHTML = out

    // 거래량
    out = ""
    ;[9, 44, 81].forEach(function (g) { out += line(0, g * sv, W, g * sv, "#d0d0d0", 1) })
    days.slice(1).forEach(function (d) { out += line(d[1] * sx, 0, d[1] * sx, V, "#f00", 1) })
    vols.forEach(function (v, i) {
        out += '<rect x="' + (i * sx).toFixed(1) + '" y="' + (V - 1 - v[0] * sv).toFixed(1) + '" width="1" height="' + (v[0] * sv).toFixed(1) + '" fill="' + (v[1] ? UP : DOWN) + '" shape-rendering="crispEdges"/>'
    })
    out += '<path d="M' + 488 * sx + " 14H" + 472 * sx + 'v5m-2 -2l2 3l2 -3" fill="none" stroke="' + UP + '"/>' + text(489 * sx, 18, "13,314(2025/11/10-15:00)", UP, 'class="note"')
    out += line(1066 * sx, 0, 1066 * sx, V, DOWN, 1, 'stroke-dasharray="3 3"') + line(1052 * sx, 32, 1066 * sx, 32, DOWN, 1, 'stroke-dasharray="3 3"')
    out += text(1048 * sx, 36, "48(2025/11/11-23:35)", DOWN, 'class="note" text-anchor="end"')
    out += line(W + 1, 0, W + 1, V, "#888", 2)
    ;[9, 27, 44, 63, 81].forEach(function (g) { out += line(W, g * sv, W + 5, g * sv, "#000", 1) })
    out += text(W + 5, 48 * sv, "10000", "#000") + text(W + 5, 85 * sv, "5000", "#000")
    out += line(0, V - 0.5, W + AXIS, V - 0.5, "#000", 1)
    volume.innerHTML = out

    // 날짜축
    out = ""
    days.forEach(function (d, i) {
        out += line(d[1] * sx, 0, d[1] * sx, 5, "#000", 1) + text(d[1] * sx + 1, 13, d[0], "#000", i ? 'class="day" font-weight="bold"' : "")
    })
    dates.innerHTML = out
}
draw()
window.addEventListener("resize", draw)
```
